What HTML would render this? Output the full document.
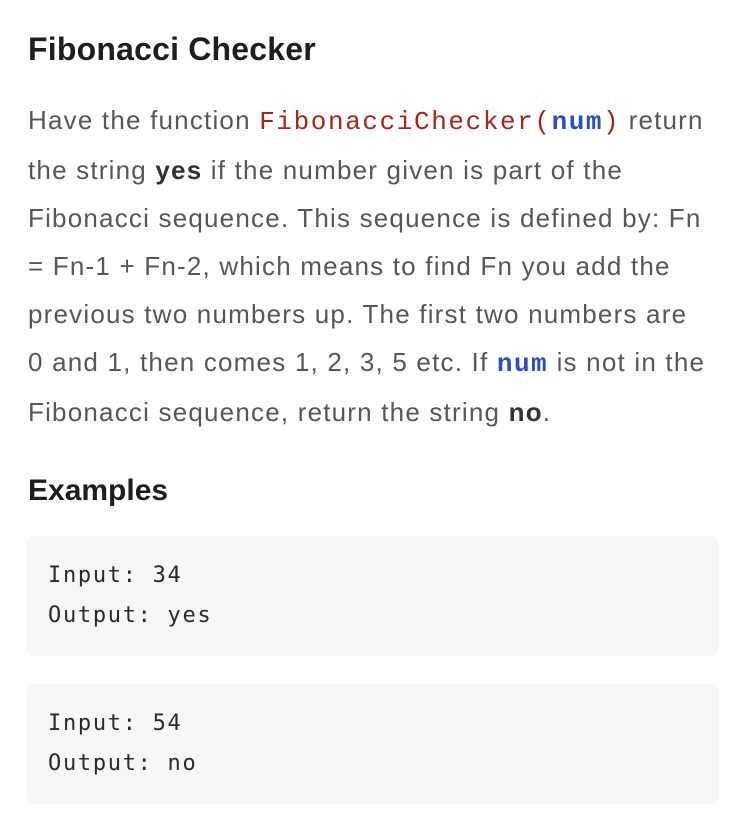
<!DOCTYPE html>
<html><head><style>
body{margin:0;width:748px;height:832px;background:#fff;font-family:"Liberation Sans",sans-serif;position:relative;overflow:hidden}
h1{position:absolute;left:28px;top:31px;margin:0;font-size:32px;font-weight:bold;color:#1e1e1e;letter-spacing:0.2px}
.p{position:absolute;left:28px;top:96px;width:720px;font-size:26px;line-height:48px;color:#575757;letter-spacing:1.2px}
.p div{white-space:nowrap}
.c{font-family:"Liberation Mono",monospace;color:#a0281e;font-size:26px;letter-spacing:1.6px}
.n{font-family:"Liberation Mono",monospace;color:#2d4fc0;font-weight:bold;font-size:26px;letter-spacing:1.5px}
b{color:#333}
h2{position:absolute;left:28px;top:474px;margin:0;font-size:30px;font-weight:bold;color:#1e1e1e}
.box{position:absolute;left:26px;width:693px;height:120px;background:#f6f6f6;border-radius:9px}
.box pre{margin:0;position:absolute;left:22px;top:20px;font-family:"DejaVu Sans Mono",monospace;font-size:22px;line-height:40px;color:#2a2a2a;letter-spacing:1.7px}
</style></head><body>
<h1>Fibonacci Checker</h1>
<div class="p">
<div>Have the function <span class="c">FibonacciChecker(<span class="n">num</span>)</span> return</div>
<div>the string <b>yes</b> if the number given is part of the</div>
<div>Fibonacci sequence. This sequence is defined by: Fn</div>
<div>= Fn-1 + Fn-2, which means to find Fn you add the</div>
<div>previous two numbers up. The first two numbers are</div>
<div>0 and 1, then comes 1, 2, 3, 5 etc. If <span class="n">num</span> is not in the</div>
<div>Fibonacci sequence, return the string <b>no</b>.</div>
</div>
<h2>Examples</h2>
<div class="box" style="top:536px"><pre>Input: 34
Output: yes</pre></div>
<div class="box" style="top:684px"><pre>Input: 54
Output: no</pre></div>
</body></html>
